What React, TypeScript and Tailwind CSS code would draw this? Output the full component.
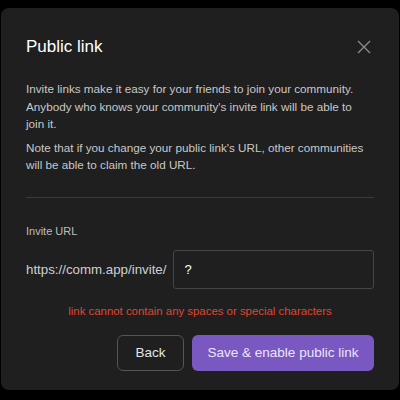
import React from 'react';

const App: React.FC = () => {
  return (
    <div className="w-[400px] h-[400px] bg-black pt-2 px-px font-['Liberation_Sans',Arial,sans-serif] overflow-hidden">
      <div className="h-[382px] bg-[#1f1f1f] rounded-lg px-[25px]">
        {/* Header */}
        <div className="flex items-center justify-between h-[72px] pt-[5px]">
          <h2 className="text-[17px] text-white">Public link</h2>
          <svg width="14" height="14" viewBox="0 0 14 14" className="mr-[3px]">
            <path d="M1 1L13 13M13 1L1 13" stroke="#8a8a8a" strokeWidth="1.4" />
          </svg>
        </div>

        {/* Description */}
        <div className="text-[11.7px] leading-[17.5px] text-[#c8c8c8] space-y-[6px] whitespace-nowrap">
          <p>
            Invite links make it easy for your friends to join your community.
            <br />
            Anybody who knows your community's invite link will be able to
            <br />
            join it.
          </p>
          <p>
            Note that if you change your public link's URL, other communities
            <br />
            will be able to claim the old URL.
          </p>
        </div>

        <div className="h-px bg-[#3a3a3a] mt-[23px]" />

        {/* Invite URL */}
        <div className="mt-[25px] text-[11px] text-[#bdbdbd]">Invite URL</div>
        <div className="flex items-center gap-[7px] mt-[11px]">
          <span className="text-[13.3px] text-[#cfcfcf]">https://comm.app/invite/</span>
          <div className="flex-1 h-[39px] border border-[#454545] rounded-[3px] flex items-center px-[10px] text-[13px] text-white">
            ?
          </div>
        </div>
        <div className="text-center text-[11.4px] text-[#e0452f] mt-[14px]">
          link cannot contain any spaces or special characters
        </div>

        {/* Actions */}
        <div className="flex justify-end gap-[8px] mt-[15px]">
          <button className="w-[67px] h-[36px] border border-[#555] rounded-[6px] text-[13.5px] text-[#e6e6e6]">
            Back
          </button>
          <button className="w-[182px] h-[36px] bg-[#7a58c1] rounded-[6px] text-[13.5px] text-[#ece6f7]">
            Save &amp; enable public link
          </button>
        </div>
      </div>
    </div>
  );
};

export default App;
